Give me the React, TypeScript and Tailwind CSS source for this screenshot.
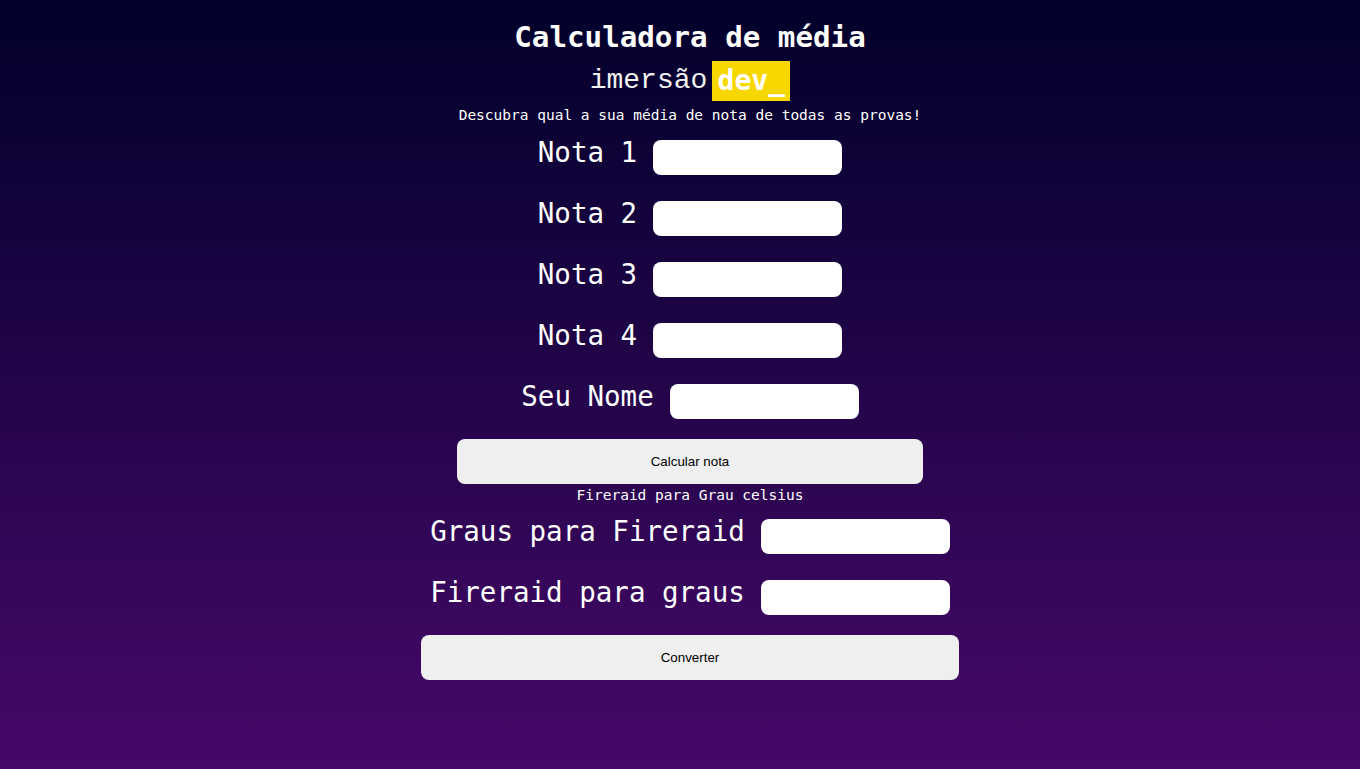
export default function App() {
    const notas = ["Nota 1", "Nota 2", "Nota 3", "Nota 4", "Seu Nome"];
    const graus = ["Graus para Fireraid", "Fireraid para graus"];

    return (
        <div className="min-h-screen w-full bg-gradient-to-b from-[#03002b] to-[#48076a] font-['DejaVu_Sans_Mono',monospace] text-white">
            <div className="flex flex-col items-center pl-[20px] pt-[19px]">
                <h1 className="text-[29.2px] leading-[36px] font-bold">Calculadora de média</h1>

                <div className="mt-[5px] flex items-center gap-[5px]">
                    <span className="font-['Liberation_Mono',monospace] text-[28px] font-light text-[#f2f2f2]">imersão</span>
                    <span className="flex h-[40px] w-[78px] items-center justify-center bg-[#f7d700] text-[28px] font-bold leading-none text-white">
                        dev_
                    </span>
                </div>

                <p className="mt-[4px] text-[14.5px] leading-[18px]">
                    Descubra qual a sua média de nota de todas as provas!
                </p>

                <div className="mt-[16px] flex flex-col items-center gap-[26px]">
                    {notas.map((label) => (
                        <div key={label} className="flex items-start gap-[16px]">
                            <label className="-mt-[1px] text-[27.5px] leading-none">{label}</label>
                            <input type="text" className="h-[35px] w-[189px] rounded-lg bg-white outline-none" />
                        </div>
                    ))}
                </div>

                <button className="mt-[20px] h-[45px] w-[466px] rounded-lg bg-[#efefef] font-['Liberation_Sans',Arial,sans-serif] text-[13.33px] text-black">
                    Calcular nota
                </button>

                <p className="mt-[2px] text-[14.5px] leading-[18px]">Fireraid para Grau celsius</p>

                <div className="mt-[15px] flex flex-col items-center gap-[26px]">
                    {graus.map((label) => (
                        <div key={label} className="flex items-start gap-[16px]">
                            <label className="-mt-[1px] text-[27.5px] leading-none">{label}</label>
                            <input type="text" className="h-[35px] w-[189px] rounded-lg bg-white outline-none" />
                        </div>
                    ))}
                </div>

                <button className="mt-[20px] h-[45px] w-[538px] rounded-lg bg-[#efefef] font-['Liberation_Sans',Arial,sans-serif] text-[13.33px] text-black">
                    Converter
                </button>
            </div>
        </div>
    );
}
